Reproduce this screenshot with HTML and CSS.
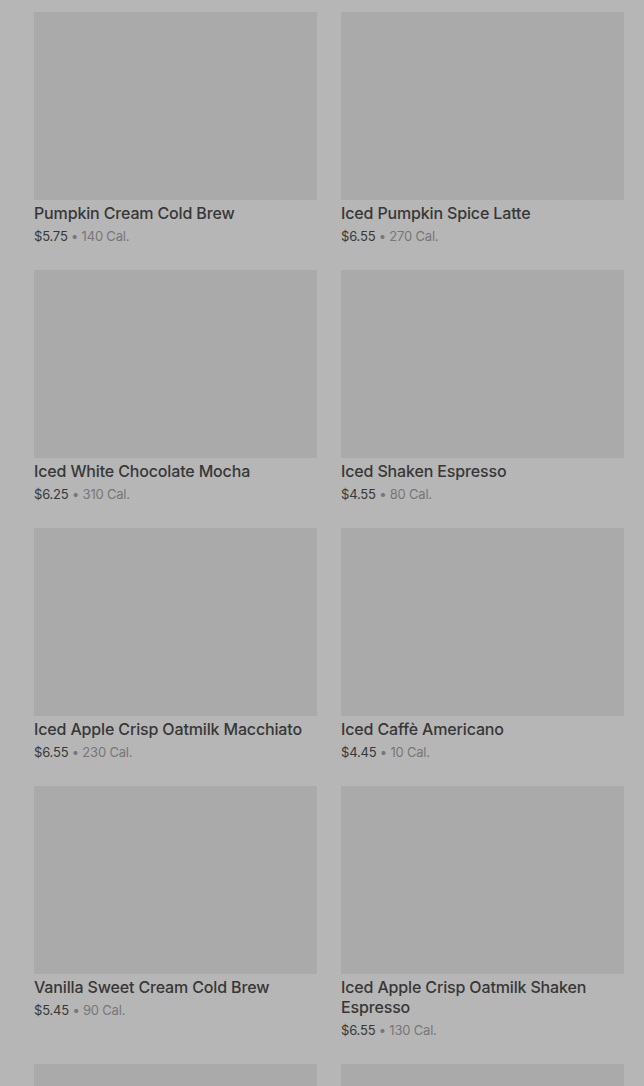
FILE: index.html
```html
<html>
  <head>
    <meta http-equiv="Content-Type" content="text/html; charset=utf-8" />
    <title>Menu</title>
    <link rel="stylesheet" href="styles.css">
  </head>
  <body>
    <div class="menu">
      <div class="item">
        <div class="photo"></div>
        <div class="name">Pumpkin Cream Cold Brew</div>
        <div class="meta">$5.75 <span class="cal">• 140 Cal.</span></div>
      </div>
      <div class="item">
        <div class="photo"></div>
        <div class="name">Iced Pumpkin Spice Latte</div>
        <div class="meta">$6.55 <span class="cal">• 270 Cal.</span></div>
      </div>
      <div class="item">
        <div class="photo"></div>
        <div class="name">Iced White Chocolate Mocha</div>
        <div class="meta">$6.25 <span class="cal">• 310 Cal.</span></div>
      </div>
      <div class="item">
        <div class="photo"></div>
        <div class="name">Iced Shaken Espresso</div>
        <div class="meta">$4.55 <span class="cal">• 80 Cal.</span></div>
      </div>
      <div class="item">
        <div class="photo"></div>
        <div class="name">Iced Apple Crisp Oatmilk Macchiato</div>
        <div class="meta">$6.55 <span class="cal">• 230 Cal.</span></div>
      </div>
      <div class="item">
        <div class="photo"></div>
        <div class="name">Iced Caffè Americano</div>
        <div class="meta">$4.45 <span class="cal">• 10 Cal.</span></div>
      </div>
      <div class="item">
        <div class="photo"></div>
        <div class="name">Vanilla Sweet Cream Cold Brew</div>
        <div class="meta">$5.45 <span class="cal">• 90 Cal.</span></div>
      </div>
      <div class="item">
        <div class="photo"></div>
        <div class="name">Iced Apple Crisp Oatmilk Shaken Espresso</div>
        <div class="meta">$6.55 <span class="cal">• 130 Cal.</span></div>
      </div>
      <div class="item">
        <div class="photo"></div>
      </div>
      <div class="item">
        <div class="photo"></div>
      </div>
    </div>
  </body>
</html>
```

FILE: styles.css
```css
body {
    margin: 0;
    background-color: #b6b6b6;
    font-family: "Inter", "Liberation Sans", sans-serif;
    overflow: hidden;
}

.menu {
    display: grid;
    grid-template-columns: 283px 283px;
    column-gap: 24px;
    row-gap: 24px;
    align-items: start;
    padding: 12px 20px 0 34px;
}

.photo {
    height: 188px;
    background-color: #aaaaaa;
}

.name {
    margin-top: 3px;
    font-size: 16px;
    font-weight: 500;
    line-height: 20px;
    letter-spacing: -0.15px;
    color: #373737;
}

.meta {
    margin-top: 3px;
    font-size: 13px;
    line-height: 20px;
    letter-spacing: -0.2px;
    color: #383838;
}

.cal {
    color: #777777;
}
```
